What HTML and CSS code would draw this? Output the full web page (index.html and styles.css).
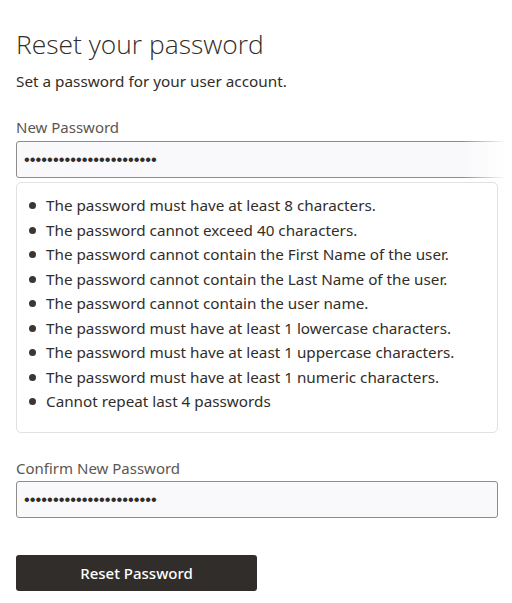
FILE: index.html
```html
<!DOCTYPE html>
<html>
<head>
<meta charset="utf-8">
<link rel="stylesheet" href="styles.css">
</head>
<body>
<main class="page">
  <h1 class="title">Reset your password</h1>
  <p class="subtitle">Set a password for your user account.</p>

  <label class="label label-new" for="pw1">New Password</label>
  <div class="field-wide">
    <input class="input input-wide" id="pw1" type="password" value="abcdefghijklmnopqrstuvw">
  </div>

  <ul class="rules">
    <li>The password must have at least 8 characters.</li>
    <li>The password cannot exceed 40 characters.</li>
    <li>The password cannot contain the First Name of the user.</li>
    <li>The password cannot contain the Last Name of the user.</li>
    <li>The password cannot contain the user name.</li>
    <li>The password must have at least 1 lowercase characters.</li>
    <li>The password must have at least 1 uppercase characters.</li>
    <li>The password must have at least 1 numeric characters.</li>
    <li>Cannot repeat last 4 passwords</li>
  </ul>

  <label class="label label-confirm" for="pw2">Confirm New Password</label>
  <input class="input input-confirm" id="pw2" type="password" value="abcdefghijklmnopqrstuvw">

  <button class="btn" type="button">Reset Password</button>
</main>
</body>
</html>
```
FILE: styles.css
```css
* { box-sizing: border-box; }
html, body { margin: 0; padding: 0; background: #fff; }
body {
  font-family: "Noto Sans", "Open Sans", "Liberation Sans", sans-serif;
  color: #312d2a;
  overflow: hidden;
}
.page {
  display: flex;
  flex-direction: column;
  align-items: flex-start;
  padding: 26px 15px 0 16px;
}
.title {
  margin: 0;
  font-family: "Open Sans", "Noto Sans", sans-serif;
  font-weight: 300;
  font-size: 26.4px;
  line-height: 36px;
  color: #312d2a;
}
.subtitle {
  margin: 9px 0 0;
  font-size: 15.3px;
  line-height: 20px;
  color: #312d2a;
}
.label {
  display: block;
  font-size: 15px;
  line-height: 20px;
  color: #5b5652;
}
.label-new { margin-top: 26px; }
.label-confirm { margin-top: 25px; }
.field-wide {
  position: relative;
  margin-top: 4px;
  width: calc(100% + 15px);
}
.field-wide::after {
  content: "";
  position: absolute;
  top: -2px;
  bottom: -2px;
  right: 0;
  width: 50px;
  background: linear-gradient(to right, rgba(255,255,255,0), #fff 90%);
  pointer-events: none;
}
.input {
  display: block;
  height: 37px;
  border: 1px solid #8f8b88;
  border-radius: 3px;
  background: #f9f9fb;
  padding: 0 7px;
  font-size: 16.5px;
  letter-spacing: 0;
  color: #312d2a;
  outline: none;
}
.input-wide { width: 100%; }
.input-confirm { width: 482px; margin-top: 3px; }
.rules {
  width: 482px;
  margin: 4px 0 0;
  padding: 10px 10px 18.5px 12px;
  border: 1px solid #e3e1df;
  border-radius: 5px;
  list-style: none;
  font-size: 15.25px;
  line-height: 24.5px;
  color: #312d2a;
}
.rules li {
  display: flex;
  align-items: center;
  gap: 10px;
}
.rules li::before {
  content: "";
  flex: none;
  width: 7px;
  height: 7px;
  border-radius: 50%;
  background: #3a3633;
  margin-top: 1px;
}
.btn {
  margin-top: 37px;
  width: 241px;
  height: 36px;
  border: none;
  border-radius: 3px;
  background: #312d2a;
  color: #fff;
  font-family: "Noto Sans", sans-serif;
  font-size: 15px;
  font-weight: 500;
}
```
